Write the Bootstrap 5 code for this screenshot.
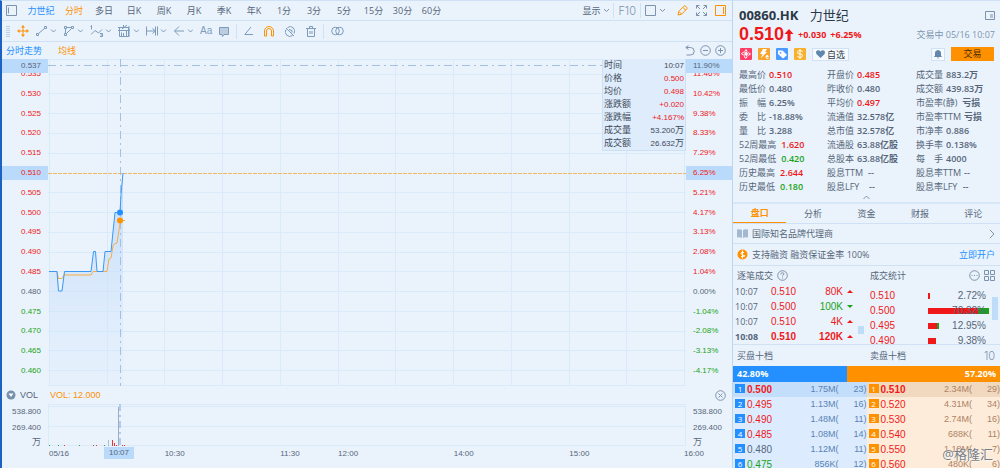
<!DOCTYPE html>
<html lang="zh-CN">
<head>
<meta charset="utf-8">
<meta name="viewport" content="width=device-width, initial-scale=1">
<title>00860.HK 力世纪</title>
<link href="https://cdn.jsdelivr.net/npm/bootstrap@5.3.0/dist/css/bootstrap.min.css" rel="stylesheet">
<style>
:root{--ink:#56667a;--dim:#7d93ad;--line:#cfe2f5;--grid:#d9eafb;--up:#f01919;--down:#18a418;--org:#ff9100;--blu:#2490ff;--tag:#badafb}
body{background:#eaf3fc;color:var(--ink);font:9px/14px "Open Sans","Noto Sans CJK SC",sans-serif}
button{padding:0;border:0;background:none;color:inherit;font:inherit;line-height:14px;white-space:nowrap}
svg{display:block;flex:none;fill:none;stroke:currentColor}
a{color:var(--blu);text-decoration:none}
.up{color:var(--up)!important}.down{color:var(--down)!important}.org{color:var(--org)!important}.blu{color:var(--blu)!important}.dim{color:var(--dim)}
.num{font-family:"Liberation Sans","Noto Sans CJK SC",sans-serif}
.quote-pane{border-left:2px solid #1d62c0;border-top:1px solid var(--line)}
.bar-a{height:20px;border-bottom:1px solid var(--line)}
.bar-b{height:21px;border-bottom:1px solid var(--line);color:#7d9bbb}
.bar-c{height:17px}
.bar-a,.bar-b,.bar-c,.vol-head{padding:0 6px 0 4px}
.tabs-a{margin-left:6px}
.tab-w{width:30px}.tab-n{width:29px}.tab-name{width:36px}
.sep{width:1px;height:15px;background:var(--line)}
.tools{gap:7px}
.grip{color:#bcd0e5}
.pen{margin-left:12px}
.axis{width:46px;flex:none;font-size:8px;position:relative}
.axis span{display:block;height:14px}
.axis-l{text-align:right}.axis-l span{padding-right:7px}
.axis-r span{padding-left:7px}
.axis-main{padding:8px 0}
.axis .hl{background:var(--tag)}
.axis .cursor{position:absolute;top:0;left:0;right:0;background:var(--tag);color:var(--ink)}
.plot svg{width:100%;height:100%;position:absolute;inset:0}
.plot svg *{vector-effect:non-scaling-stroke}
.tip{position:absolute;top:0;right:0;width:84px;border:1px solid #cbdff5;border-width:0 1px 1px;background:#deecfc;color:#3f4a58;line-height:13px;padding:0 1px}
.tip dt{font-weight:400;line-height:13px}.tip dd{margin:0;font-size:8px;line-height:13px}
.tip i{font-style:normal;font-size:9px;line-height:1}
.vol-head{height:18px}
.vol-row{height:42px}
.vol-row .axis{line-height:16px}
.vol-row .axis span{height:16px}
.vol-row .axis span.unit{height:12px;line-height:12px;font-size:9px}
.times{height:22px;margin-left:46px;margin-right:48px;display:grid;grid-template-columns:repeat(11,1fr);font-size:8px;position:relative}
.times span{padding-left:1px;white-space:nowrap;line-height:15px}
.times .end{width:0;justify-self:end}
.times .now{position:absolute;left:56px;top:1px;width:30px;height:12px;line-height:12px;background:var(--tag);text-align:center;padding:0}
.side{width:268px;flex:none;border-left:1px solid #bcd6f1;border-top:1px solid var(--line)}
.head-row{padding:0 5px 0 6px}
.code{font-size:13px;line-height:20px;font-weight:700;color:#2c3848}
.code span{font-weight:400}
.price{font-size:18px;line-height:19px;font-weight:700}
.chips{margin-top:3px;padding:0 6px 0 7px;height:14px;gap:6px}
.chip{width:12px;height:12px;border-radius:1px;color:#fff}
.box{background:#f6fafe;border:1px solid #cfe2f5;height:13px;line-height:11px;color:#323d4b}
.trade{width:43px;height:14px;background:var(--org);color:#4a2c00}
.facts{display:grid;grid-template-columns:88px 89px 1fr;grid-template-rows:repeat(9,1fr);height:124px;margin-top:7px;padding:0 0 0 6px;white-space:pre}
.facts b{font-weight:600;margin-left:3px}
.facts .wide{margin-left:5px}
.rule{border-bottom:1px solid var(--line)}
.sec-tabs{height:22px;border-top:2px solid #d6e7f8}
.sec-tabs button{flex:1 1 0}
.sec-tabs .on{border-bottom:1px solid var(--org);font-weight:700}
.info{padding:0 5px 0 4px}
.half{width:133px;flex:none}
.deals{height:61px;overflow:hidden}
.ticks{width:125px;flex:none;padding-left:2px}
.stats{min-width:0;padding:4px 2px 0 6px}
.deals table,.book table{border-collapse:collapse;width:100%;table-layout:fixed}
td{padding:0;height:15px;line-height:15px;white-space:nowrap}
.n10{font-family:"Liberation Sans",sans-serif;font-size:10px}
.thumb{background:#bfdcf9;flex:none}
.hbar{height:6px;display:flex}
.hbar span{display:block;height:6px}
.share{height:16px;line-height:16px;color:#fff;font-weight:700}
.book td{font-family:"Liberation Sans",sans-serif}
.bid td{background:#dcecfe;color:#5a82b5}.ask td{background:#fdecda;color:#ae8266}
.bid tr:first-child td{background:#c3defb}.ask tr:first-child td{background:#f1d9bf}
.book td:first-child{padding-left:2px;font-size:10px}
.book td+td{text-align:right;font-size:9px}
.book tr:first-child td:first-child{font-weight:700}
.lv{display:inline-block;width:10px;height:9px;color:#fff;background:var(--blu);font:400 8px/9px "Open Sans",sans-serif;text-align:center;margin-right:2px;vertical-align:1px}
.ask .lv{background:var(--org)}
.thin{font-family:Inter,sans-serif;font-weight:300;font-size:11px;color:#7d93ad}
.wm{position:absolute;right:7px;bottom:5px;font-size:13px;line-height:18px;color:#777c83;text-shadow:0 0 1px #fff,1px 1px 0 #fff8;white-space:nowrap}
</style>
</head>
<body class="vh-100 overflow-hidden">
<div class="d-flex h-100">
<main class="quote-pane d-flex flex-column flex-grow-1">
  <nav class="bar-a d-flex align-items-center flex-shrink-0">
    <button aria-label="侧栏" class="dim"><svg width="11" height="11"><path d="M.5.5h10v10H.5zM2.5 2.5v6"/></svg></button>
    <span class="d-flex tabs-a">
    <button class="tab-name blu">力世纪</button><button class="tab-w org">分时</button><button class="tab-w">多日</button><button class="tab-w">日K</button><button class="tab-w">周K</button><button class="tab-w">月K</button><button class="tab-w">季K</button><button class="tab-w">年K</button><button class="tab-w">1分</button><button class="tab-w">3分</button><button class="tab-w">5分</button><button class="tab-n">15分</button><button class="tab-n">30分</button><button class="tab-n">60分</button></span>
    <span class="ms-auto d-flex align-items-center dim">
      <button class="d-flex align-items-center" style="color:#56667a">显示<svg class="ms-1 dim" width="5" height="5"><path d="M0 1l2.500 2.500L5 1"/></svg></button>
      <span class="sep mx-1"></span>
      <button class="thin">F10</button>
      <span class="sep mx-1"></span>
      <button class="d-flex align-items-center gap-1" aria-label="窗口"><svg width="11" height="11"><path d="M.5.5h10v10H.5z"/></svg><svg width="5" height="5"><path d="M0 1l2.500 2.500L5 1"/></svg></button>
      <button class="org pen" aria-label="画笔"><svg width="11" height="11" viewBox="0 0 11 11"><path d="M1 10l.7-3.500L7 1.200q.8-.7 1.600 0l1.200 1.200q.8.800 0 1.600L4.500 9.300zM2 6.500l2.500 2.500M6 2.500l2.500 2.500"/></svg></button>
      <button class="ms-2" aria-label="全屏"><svg width="11" height="11" viewBox="0 0 11 11"><path d="M.5 3.500v-3h3M.5.5l3.500 3.500M7.500.5h3v3M10.500.5L7 4M.5 7.500v3h3M.5 10.500L4 7M10.500 7.500v3h-3M10.500 10.500L7 7"/></svg></button>
      <button class="org ms-2" aria-label="右栏"><svg width="11" height="11"><path stroke="#ff9100" d="M.5.5h10v10H.5zM8.500 2v7"/></svg></button>
    </span>
  </nav>
  <nav class="bar-b tools d-flex align-items-center flex-shrink-0">
    <svg class="grip" width="4" height="11"><path d="M0 .5h4M0 2.500h4M0 4.500h4M0 6.500h4M0 8.500h4M0 10.500h4"/></svg>
    <button class="org" aria-label="移动"><svg width="12" height="12" viewBox="0 0 12 12"><path d="M6 1v10M1 6h10"/><path fill="currentColor" stroke="none" d="M6 0l2 2.500H4zM6 12l2-2.500H4zM0 6l2.500-2v4zM12 6L9.500 4v4z"/></svg></button>
    <button aria-label="线段"><svg width="20" height="12" viewBox="0 0 20 12"><path d="M.5 8.500h2v2h-2zM8.500 1.500h2v2h-2zM2.500 8.500l6-5M15 4.500L17.500 7 20 4.500"/></svg></button>
    <button aria-label="形状"><svg width="20" height="12" viewBox="0 0 20 12"><path d="M1.500 1.500h2v2h-2zM8.500 1.500h2v2h-2zM1.500 8.500h2v2h-2zM3.500 2.500h5M2.500 3.500v5M3.500 8.500l5-5M15 4.500L17.500 7 20 4.500"/></svg></button>
    <button aria-label="波浪"><svg width="21" height="12" viewBox="0 0 21 12"><path d="M.5 1.500l1-1v4M1 9.500l4-4 3.500 2.500L12 4.500M10 8.500h2.500v3H10M10.500 10h2M16 4.500L18.500 7 21 4.500"/></svg></button>
    <button aria-label="分析"><svg width="21" height="12" viewBox="0 0 21 12"><path d="M1.500 2.500h9v9h-9zM0 5.500h12M3.500 12V7.500M5.500 11V8M8.500 11V5.500M0 2.500h3M4 4l5-4M5.500 0v3M11 1v11M16 4.500L18.500 7 21 4.500"/></svg></button>
    <button aria-label="测量"><svg width="21" height="12" viewBox="0 0 21 12"><path d="M.5 1.500v9M11.500 1.500v9M9.500 1.500v9M1 6h9M6.500 3.500L9.500 6l-3 2.500M15 4.500L17.500 7 20 4.500"/></svg></button>
    <button aria-label="箭头"><svg width="19" height="12" viewBox="0 0 19 12"><path d="M.5 6H10M5 1.500L.5 6 5 10.500M14 4.500L16.500 7 19 4.500"/></svg></button>
    <button class="n10">Aa</button>
    <button aria-label="批注"><svg width="10" height="11" viewBox="0 0 10 11"><path fill="#bccede" d="M.5 1.500h9v7H5L3.500 10.500 3 8.500H.5z"/></svg></button>
    <span class="sep"></span>
    <button aria-label="角度"><svg width="9" height="10" viewBox="0 0 9 10"><path d="M7 1L.8 8.500H9"/></svg></button>
    <button class="org ms-1" aria-label="磁铁"><svg width="10" height="11" viewBox="0 0 10 11"><path d="M.5 10V5a4.500 4.500 0 019 0v5h-2V5a2.500 2.500 0 00-5 0v5z"/></svg></button>
    <button aria-label="隐藏"><svg class="ms-1" width="10" height="11" viewBox="0 0 10 11"><path d="M1 2l8 8M2.500 1.500a4.500 4.500 0 016.500 6M7.500 9.500A4.500 4.500 0 011 3.500M4 3.500l3 1v2"/></svg></button>
    <button aria-label="删除"><svg class="ms-1" width="10" height="11" viewBox="0 0 10 11"><path d="M0 2.500h10M3.500 2V.5h3V2M1.500 2.500v8h7v-8M4 5v3M6 5v3"/></svg></button>
    <span class="sep"></span>
    <button aria-label="叠加"><svg width="13" height="10" viewBox="0 0 13 10"><circle cx="4.500" cy="5" r="3.800"/><circle cx="8.500" cy="5" r="3.800"/></svg></button>
  </nav>
  <div class="bar-c d-flex align-items-center flex-shrink-0">
    <span class="blu">分时走势</span><span class="org ms-3">均线</span>
    <span class="ms-auto d-flex gap-1 dim">
      <button aria-label="重置"><svg width="11" height="11" viewBox="0 0 11 11"><path d="M3.500.5L.8 2.500l2.700 2M1 2.500h4.500a3.700 3.700 0 010 7.500H1.500"/></svg></button>
      <button aria-label="缩小"><svg width="11" height="11"><circle cx="5.500" cy="5.500" r="4.800"/><path d="M3 5.500h5"/></svg></button>
      <button aria-label="放大"><svg width="11" height="11"><circle cx="5.500" cy="5.500" r="4.800"/><path d="M3 5.500h5M5.500 3v5"/></svg></button>
    </span>
  </div>
  <section class="d-flex flex-grow-1 num">
    <div class="axis axis-l axis-main up d-flex flex-column justify-content-between">
      <span>0.535</span><span>0.530</span><span>0.525</span><span>0.520</span><span>0.515</span><span class="hl">0.510</span><span>0.505</span><span>0.500</span><span>0.495</span><span>0.490</span><span>0.485</span><span style="color:#56667a">0.480</span><span class="down">0.475</span><span class="down">0.470</span><span class="down">0.465</span><span class="down">0.460</span>
      <span class="cursor">0.537</span>
    </div>
    <div class="plot flex-grow-1 position-relative">
      <svg viewBox="0 0 638 327" preserveAspectRatio="none">
        <defs><linearGradient id="fade" x1="0" y1="0" x2="0" y2="1"><stop offset="0" stop-color="#b9d6fa" stop-opacity=".8"/><stop offset="1" stop-color="#d9e9fc" stop-opacity=".25"/></linearGradient></defs>
        <path stroke="#d9eafb" d="M0 .5h638M0 15.500h638M0 34.500h638M0 54.500h638M0 74.500h638M0 94.500h638M0 133.500h638M0 153.500h638M0 173.500h638M0 193.500h638M0 212.500h638M0 232.500h638M0 252.500h638M0 272.500h638M0 291.500h638M0 311.500h638M0 326.500h638"/>
        <path stroke="#d9eafb" d="M1.500 0v327M59.500 0v327M116.500 0v327M174.500 0v327M232.500 0v327M290.500 0v327M347.500 0v327M405.500 0v327M463.500 0v327M521.500 0v327M578.500 0v327M636.500 0v327"/>
        <path fill="url(#fade)" stroke="none" d="M1 212.500H9L10.500 232H14l2.500-19.500H43l2.500-20h2l1.500 20h6l2-20h6l4-39h5L75 114V327H1z"/>
        <path stroke="#f0b866" stroke-dasharray="4 1" d="M0 114.500h638"/>
        <path stroke="#a3c1e4" stroke-dasharray="8 4 2 4" d="M0 6.500h638M72.500 0v327"/>
        <path stroke="#f5ad45" d="M9 213l1.500 6.500H14l2-3.500H43l2-3.500H59l2-12.500 2-1 2-12 2-2.500 2-.5 3.500-22.500H77"/>
        <path stroke="#3b97f5" d="M1 212.500H9L10.500 232H14l2.500-19.500H43l2.500-20h2l1.500 20h6l2-20h6l4-39h5l1-18L75 114"/>
        <circle cx="72" cy="153.500" r="3" fill="#2490ff" stroke="none"/><circle cx="72" cy="161.500" r="3" fill="#ff9100" stroke="none"/>
      </svg>
      <dl class="tip mb-0">
        <div class="d-flex justify-content-between"><dt>时间</dt><dd>10:07</dd></div>
        <div class="d-flex justify-content-between"><dt>价格</dt><dd class="up">0.500</dd></div>
        <div class="d-flex justify-content-between"><dt>均价</dt><dd class="up">0.498</dd></div>
        <div class="d-flex justify-content-between"><dt>涨跌额</dt><dd class="up">+0.020</dd></div>
        <div class="d-flex justify-content-between"><dt>涨跌幅</dt><dd class="up">+4.167%</dd></div>
        <div class="d-flex justify-content-between"><dt>成交量</dt><dd>53.200<i>万</i></dd></div>
        <div class="d-flex justify-content-between"><dt>成交额</dt><dd>26.632<i>万</i></dd></div>
      </dl>
    </div>
    <div class="axis axis-r axis-main up d-flex flex-column justify-content-between">
      <span>11.46%</span><span>10.42%</span><span>9.38%</span><span>8.33%</span><span>7.29%</span><span class="hl">6.25%</span><span>5.21%</span><span>4.17%</span><span>3.13%</span><span>2.08%</span><span>1.04%</span><span style="color:#56667a">0.00%</span><span class="down">-1.04%</span><span class="down">-2.08%</span><span class="down">-3.13%</span><span class="down">-4.17%</span>
      <span class="cursor">11.90%</span>
    </div>
  </section>
  <div class="vol-head d-flex align-items-center flex-shrink-0 num">
    <button aria-label="指标"><svg width="10" height="10"><circle cx="5" cy="5" r="4.500" fill="#7390ae" stroke="none"/><path fill="#fff" stroke="none" d="M2.500 3.500h5L5 7z"/></svg></button>
    <span class="ms-1">VOL</span><span class="org ms-2 ps-1">VOL: 12.000</span>
    <button class="ms-auto dim" aria-label="关闭"><svg width="11" height="11"><circle cx="5.500" cy="5.500" r="4.800"/><path d="M3.500 3.500l4 4M7.500 3.500l-4 4"/></svg></button>
  </div>
  <div class="vol-row d-flex flex-shrink-0 num">
    <div class="axis axis-l"><span>538.800</span><span>269.400</span><span class="unit">万</span></div>
    <div class="plot flex-grow-1 position-relative">
      <svg viewBox="0 0 638 42" preserveAspectRatio="none">
        <path stroke="#d9eafb" d="M0 .5h638M0 2.500h638M0 22.500h638M0 41.500h638M.5 0v42M637.500 0v42"/>
        <path stroke="#a9bfd6" d="M60.500 36v6"/><path stroke="#98aec6" d="M70.500 3v39"/>
        <path stroke="#a3c1e4" stroke-width="1.500" stroke-dasharray="7 4 2 4" d="M72 0v42"/>
        <path stroke="#f03030" d="M64.500 36v6M66.500 39v3M68.500 41v1M16.500 41v1M45.500 41v1M48.500 41v1M74.500 41v1M76.500 41v1"/>
        <path stroke="#3aa655" d="M1.500 41v1M10.500 41v1M31.500 41v1M56.500 41v1"/>
      </svg>
    </div>
    <div class="axis axis-r"><span>538.800</span><span>269.400</span><span class="unit">万</span></div>
  </div>
  <div class="times num flex-shrink-0">
    <span style="grid-column:1">05/16</span><span style="grid-column:3">10:30</span><span style="grid-column:5">11:30</span><span style="grid-column:6">12:00</span><span style="grid-column:8">14:00</span><span style="grid-column:10">15:00</span><span class="end" style="grid-column:11">16:00</span>
    <span class="now">10:07</span>
  </div>
</main>

<aside class="side d-flex flex-column overflow-hidden">
  <div class="head-row d-flex align-items-center pt-1 flex-shrink-0">
    <div class="code">00860.HK <span class="ms-1 ps-1">力世纪</span></div>
    <button class="ms-auto dim" aria-label="详情"><svg width="10" height="9"><path d="M.5.500h9v8h-9M.5.500v8M5 4h3M5 6h3"/></svg></button>
  </div>
  <div class="head-row d-flex align-items-center flex-shrink-0 dim">
    <span class="price num up">0.510</span>
    <svg class="up" width="10" height="12" viewBox="0 0 10 12"><path fill="currentColor" stroke="none" d="M5 0l4.500 5H6.500v7h-3V5H.5z"/></svg>
    <b class="up ms-1">+0.030</b><b class="up ms-1">+6.25%</b>
    <span class="ms-auto">交易中 05/16 10:07</span>
  </div>
  <div class="chips d-flex align-items-center flex-shrink-0">
    <span class="chip" style="background:#ff3b66"><svg width="12" height="12" viewBox="0 0 12 12"><path d="M6 6Q3.500 3 6 1.500 8 3 6 6q3-2.500 4.500 0Q9 8.500 6 6q2 3.500 0 4.300Q3 9.500 6 6q-3.500 2-4.500-.5Q3 3 6 6"/></svg></span>
    <span class="chip" style="background:#f9a52b"><svg width="12" height="12" viewBox="0 0 12 12"><path fill="#fff" stroke="none" d="M5 1h4L7 4h2L3 10l1.500-4H2z"/><path d="M8 8.500h2.500Q10 7 8.500 7.500 7.500 9 8.500 10.300h2"/></svg></span>
    <span class="chip" style="background:#4b9bff"><svg width="12" height="12" viewBox="0 0 12 12"><path fill="#fff" stroke="none" d="M2 2.500h4.500L11 7 7 10.500 2 6z"/><circle cx="4.500" cy="4.800" r=".9" fill="#4b9bff" stroke="none"/></svg></span>
    <span class="chip" style="background:#f9b02b"><svg width="12" height="12" viewBox="0 0 12 12"><path d="M8.500 4Q8 2.500 6 2.500T3.500 4.200 6 6t2.500 1.800T6 9.500 3.500 8M6 1v10"/></svg></span>
    <button class="box d-flex align-items-center" style="padding:0 3px;gap:2px"><svg width="9" height="8" viewBox="0 0 9 8"><path fill="#5f86ad" stroke="none" d="M4.500 8L.6 4.200Q-.7 2 1 .6 3-.6 4.500 1.500 6-.6 8 .6q1.700 1.400.4 3.600z"/></svg>自选</button>
    <button class="box ms-auto" style="padding:0 2px" aria-label="提醒"><svg width="8" height="9" viewBox="0 0 8 9"><path fill="#6286ad" stroke="none" d="M4 0q3 .5 3 3v2.500L8 7H0l1-1.500V3Q1 .5 4 0zM3 7.600h2L4 9z"/></svg></button>
    <button class="trade">交易</button>
  </div>
  <div class="facts flex-shrink-0"><span>最高价<b class="up">0.510</b></span><span>开盘价<b class="up">0.485</b></span><span>成交量<b>883.2万</b></span><span>最低价<b>0.480</b></span><span>昨收价<b>0.480</b></span><span>成交额<b>439.83万</b></span><span>振　幅<b>6.25%</b></span><span>平均价<b class="up">0.497</b></span><span>市盈率(静)<b class="wide">亏损</b></span><span>委　比<b>-18.88%</b></span><span>流通值<b>32.578亿</b></span><span>市盈率TTM<b>亏损</b></span><span>量　比<b>3.288</b></span><span>总市值<b>32.578亿</b></span><span>市净率<b>0.886</b></span><span>52周最高<b class="up wide">1.620</b></span><span>流通股<b>63.88亿股</b></span><span>换手率<b>0.138%</b></span><span>52周最低<b class="down wide">0.420</b></span><span>总股本<b>63.88亿股</b></span><span>每　手<b>4000</b></span><span>历史最高<b class="up wide">2.644</b></span><span>股息TTM<b class="wide">--</b></span><span>股息率TTM<b>--</b></span><span>历史最低<b class="down wide">0.180</b></span><span>股息LFY  <b class="wide">--</b></span><span>股息率LFY <b>--</b></span></div>
  <button class="mx-auto dim flex-shrink-0" style="height:10px" aria-label="收起"><svg width="7" height="5"><path d="M.5 4L3.500 1l3 3"/></svg></button>
  <nav class="sec-tabs rule d-flex flex-shrink-0"><button class="on org">盘口</button><button>分析</button><button>资金</button><button>财报</button><button>评论</button></nav>
  <div class="info rule d-flex align-items-center flex-shrink-0" style="height:20px">
    <svg class="me-1" width="11" height="9" viewBox="0 0 11 9"><path fill="#a3b9cf" stroke="none" d="M0 .5Q3 0 5 1v8Q3 8 0 8.500zM11 .5Q8 0 6 1v8q2-1 5-.5z"/></svg><span>国际知名品牌代理商</span>
    <svg class="ms-auto dim" width="6" height="10"><path d="M.8.8L5 5 .8 9.200"/></svg>
  </div>
  <div class="info rule d-flex align-items-center flex-shrink-0" style="height:22px">
    <svg class="me-1" width="11" height="11" viewBox="0 0 11 11"><circle cx="5.500" cy="5.500" r="5" fill="#ff9100" stroke="none"/><path stroke="#fff" d="M7 3.500Q4 2.500 4 4.200T7 6.500 4 7.700M5.500 1.500v8"/></svg><span>支持融资 融资保证金率 100%</span>
    <a class="ms-auto" href="#">立即开户</a>
  </div>
  <div class="info d-flex flex-shrink-0 dim align-items-center" style="height:18px;padding-top:1px">
    <span class="half d-flex align-items-center gap-1" style="color:#56667a">逐笔成交 <svg class="dim" width="11" height="11"><circle cx="5.500" cy="5.500" r="4.800"/><path d="M3.800 4.500q0-1.800 1.800-1.800 2.500.6.800 2.300-.9.500-.9 1.500M5.500 7.500v1"/></svg></span>
    <span style="color:#56667a">成交统计</span>
    <button class="ms-auto me-1" aria-label="更多"><svg width="11" height="11"><circle cx="5.500" cy="5.500" r="4.800"/><path d="M2.500 5.500h1M5 5.500h1M7.500 5.500h1"/></svg></button>
    <button aria-label="布局"><svg width="11" height="11"><path d="M.5.500h4v4h-4zM6.500.500h4v4h-4zM.5 6.500h4v4h-4zM6.500 6.500h4v4h-4z"/></svg></button>
  </div>
  <div class="deals rule d-flex flex-shrink-0">
    <div class="ticks">
      <table><colgroup><col style="width:36px"><col style="width:28px"><col><col style="width:15px"></colgroup>
        <tr><td>10:07</td><td class="n10 up">0.510</td><td class="n10 up text-end">80K</td><td class="up"><svg class="ms-1" width="6" height="4"><path fill="currentColor" stroke="none" d="M0 3L3 0l3 3z"/></svg></td></tr>
        <tr><td>10:07</td><td class="n10 up">0.500</td><td class="n10 down text-end">100K</td><td class="down"><svg class="ms-1" width="6" height="4"><path fill="currentColor" stroke="none" d="M0 0l3 3 3-3z"/></svg></td></tr>
        <tr><td>10:07</td><td class="n10 up">0.510</td><td class="n10 up text-end">4K</td><td class="up"><svg class="ms-1" width="6" height="4"><path fill="currentColor" stroke="none" d="M0 3L3 0l3 3z"/></svg></td></tr>
        <tr class="fw-bold"><td>10:08</td><td class="n10 up">0.510</td><td class="n10 up text-end">120K</td><td class="up"><svg class="ms-1" width="6" height="4"><path fill="currentColor" stroke="none" d="M0 3L3 0l3 3z"/></svg></td></tr>
      </table>
    </div>
    <div class="thumb align-self-end" style="width:6px;height:8px;margin-bottom:10px"></div>
    <div class="stats flex-grow-1">
      <table><colgroup><col style="width:58px"><col></colgroup>
        <tr><td class="n10 up">0.510</td><td class="n10"><div class="position-relative text-end pe-1"><div class="hbar position-absolute top-50 start-0 w-100 translate-middle-y"><span style="width:4%;background:#f01919"></span></div><span class="position-relative">2.72%</span></div></td></tr>
        <tr><td class="n10 up">0.500</td><td class="n10"><div class="position-relative text-end pe-1"><div class="hbar position-absolute top-50 start-0 w-100 translate-middle-y"><span style="width:80%;background:#f01919"></span><span style="width:18%;background:#18a418"></span></div><span class="position-relative">70.32%</span></div></td></tr>
        <tr><td class="n10 up">0.495</td><td class="n10"><div class="position-relative text-end pe-1"><div class="hbar position-absolute top-50 start-0 w-100 translate-middle-y"><span style="width:15%;background:#f01919"></span><span style="width:2%;background:#18a418"></span></div><span class="position-relative">12.95%</span></div></td></tr>
        <tr><td class="n10 up">0.490</td><td class="n10"><div class="position-relative text-end pe-1"><div class="hbar position-absolute top-50 start-0 w-100 translate-middle-y"><span style="width:13%;background:#f01919"></span></div><span class="position-relative">9.38%</span></div></td></tr>
      </table>
    </div>
    <div class="thumb" style="width:6px;height:23px;margin-top:13px;margin-right:2px"></div>
  </div>
  <div class="info d-flex flex-shrink-0 align-items-center" style="height:21px">
    <span class="half">买盘十档</span><span>卖盘十档</span><button class="ms-auto thin">10</button>
  </div>
  <div class="share d-flex flex-shrink-0"><span style="width:42.8%;background:#2490ff;padding-left:4px">42.80%</span><span class="text-end flex-grow-1" style="background:#ff9100;padding-right:4px">57.20%</span></div>
  <div class="book d-flex flex-shrink-0 position-relative">
    <table class="bid"><colgroup><col style="width:50px"><col><col style="width:28px"></colgroup>
      <tr><td class="up"><span class="lv">1</span>0.500</td><td>1.75M(</td><td>23)</td></tr>
      <tr><td class="up"><span class="lv">2</span>0.495</td><td>1.13M(</td><td>16)</td></tr>
      <tr><td class="up"><span class="lv">3</span>0.490</td><td>1.48M(</td><td>11)</td></tr>
      <tr><td class="up"><span class="lv">4</span>0.485</td><td>1.08M(</td><td>14)</td></tr>
      <tr><td style="color:#56667a"><span class="lv">5</span>0.480</td><td>1.12M(</td><td>11)</td></tr>
      <tr><td class="down"><span class="lv">6</span>0.475</td><td>856K(</td><td>12)</td></tr>
    </table>
    <table class="ask"><colgroup><col style="width:50px"><col><col style="width:28px"></colgroup>
      <tr><td class="up"><span class="lv">1</span>0.510</td><td>2.34M(</td><td>29)</td></tr>
      <tr><td class="up"><span class="lv">2</span>0.520</td><td>4.31M(</td><td>34)</td></tr>
      <tr><td class="up"><span class="lv">3</span>0.530</td><td>2.74M(</td><td>16)</td></tr>
      <tr><td class="up"><span class="lv">4</span>0.540</td><td>688K(</td><td>11)</td></tr>
      <tr><td class="up"><span class="lv">5</span>0.550</td><td>1.18M(</td><td>7)</td></tr>
      <tr><td class="up"><span class="lv">6</span>0.560</td><td>480K(</td><td>6)</td></tr>
    </table>
  </div>
</aside>
</div>
<div class="wm">@格隆汇</div>
<script src="https://cdn.jsdelivr.net/npm/bootstrap@5.3.0/dist/js/bootstrap.bundle.min.js"></script>
</body>
</html>
